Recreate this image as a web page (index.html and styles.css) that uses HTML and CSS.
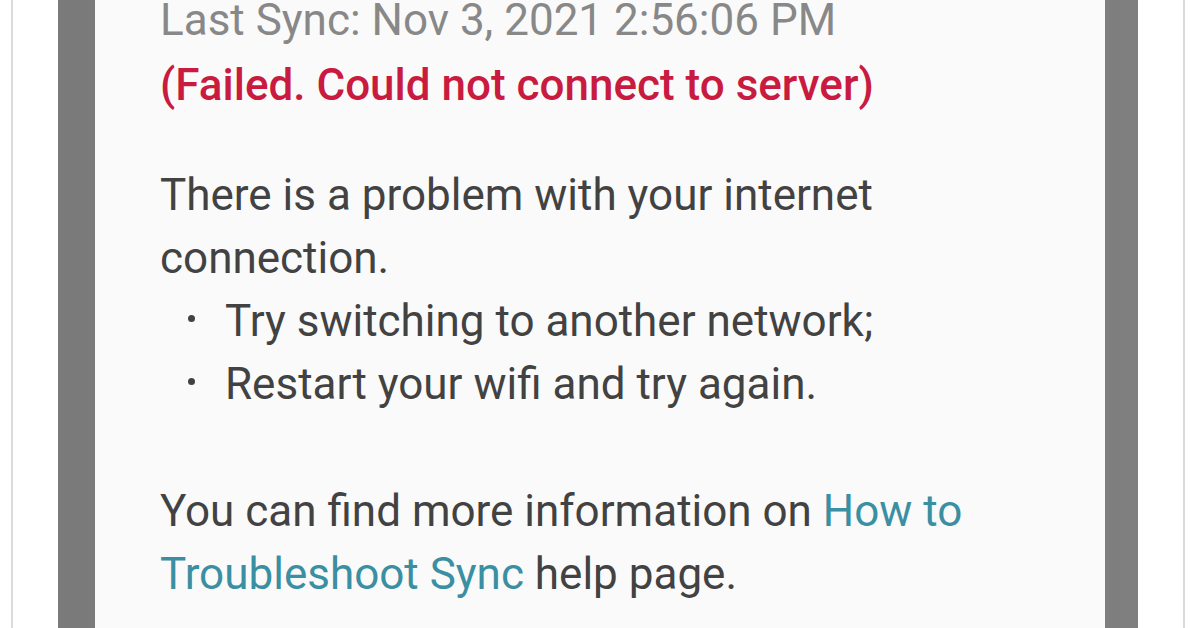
FILE: index.html
```html
<!DOCTYPE html>
<html lang="en">
<head>
    <meta charset="UTF-8">
    <meta name="viewport" content="width=device-width, initial-scale=1.0">
    <title>Sync status</title>
    <link rel="stylesheet" href="styles.css">
</head>
<body>
    <div class="frame">
        <div class="phone">
            <div class="card">
                <p class="sync-time">Last Sync: Nov 3, 2021 2:56:06 PM</p>
                <p class="sync-error">(Failed. Could not connect to server)</p>

                <p class="message">There is a problem with your internet connection.</p>
                <ul class="tips">
                    <li>Try switching to another network;</li>
                    <li>Restart your wifi and try again.</li>
                </ul>

                <p class="more">You can find more information on <a href="#">How to Troubleshoot Sync</a> help page.</p>
            </div>
        </div>
    </div>
</body>
</html>
```

FILE: styles.css
```css
body {
    margin: 0;
    background: #fff;
    font-family: Roboto, "Liberation Sans", sans-serif;
    overflow: hidden;
}
.frame {
    margin: 0 11px;
    height: 628px;
    padding: 0 45px;
    border-left: 2px solid #dadada;
    border-right: 2px solid #dadada;
}
.phone {
    height: 100%;
    padding: 0 33px 0 37px;
    background: linear-gradient(to right, #7a7a7a, #858585 45%, #727272 55%, #7f7f7f);
}
.card {
    display: flow-root;
    height: 100%;
    background: #fafafa;
    padding: 0 40px 0 65px;
    font-size: 44px;
    line-height: 63px;
    color: #424242;
}
.card p {
    margin: 0;
}
.card .sync-time {
    margin-top: -11px;
    color: #888;
}
.card .sync-error {
    margin-top: 2px;
    margin-bottom: 47px;
    color: #c91a40;
    font-weight: 500;
}
.tips {
    list-style: none;
    margin: 0 0 64px 0;
    padding: 0;
}
.tips li::before {
    content: "";
    display: inline-block;
    width: 7px;
    height: 7px;
    margin: 0 30px 0 28px;
    border-radius: 50%;
    background: #424242;
    vertical-align: 14px;
}
.more a {
    color: #3a8fa3;
    text-decoration: none;
}
```
